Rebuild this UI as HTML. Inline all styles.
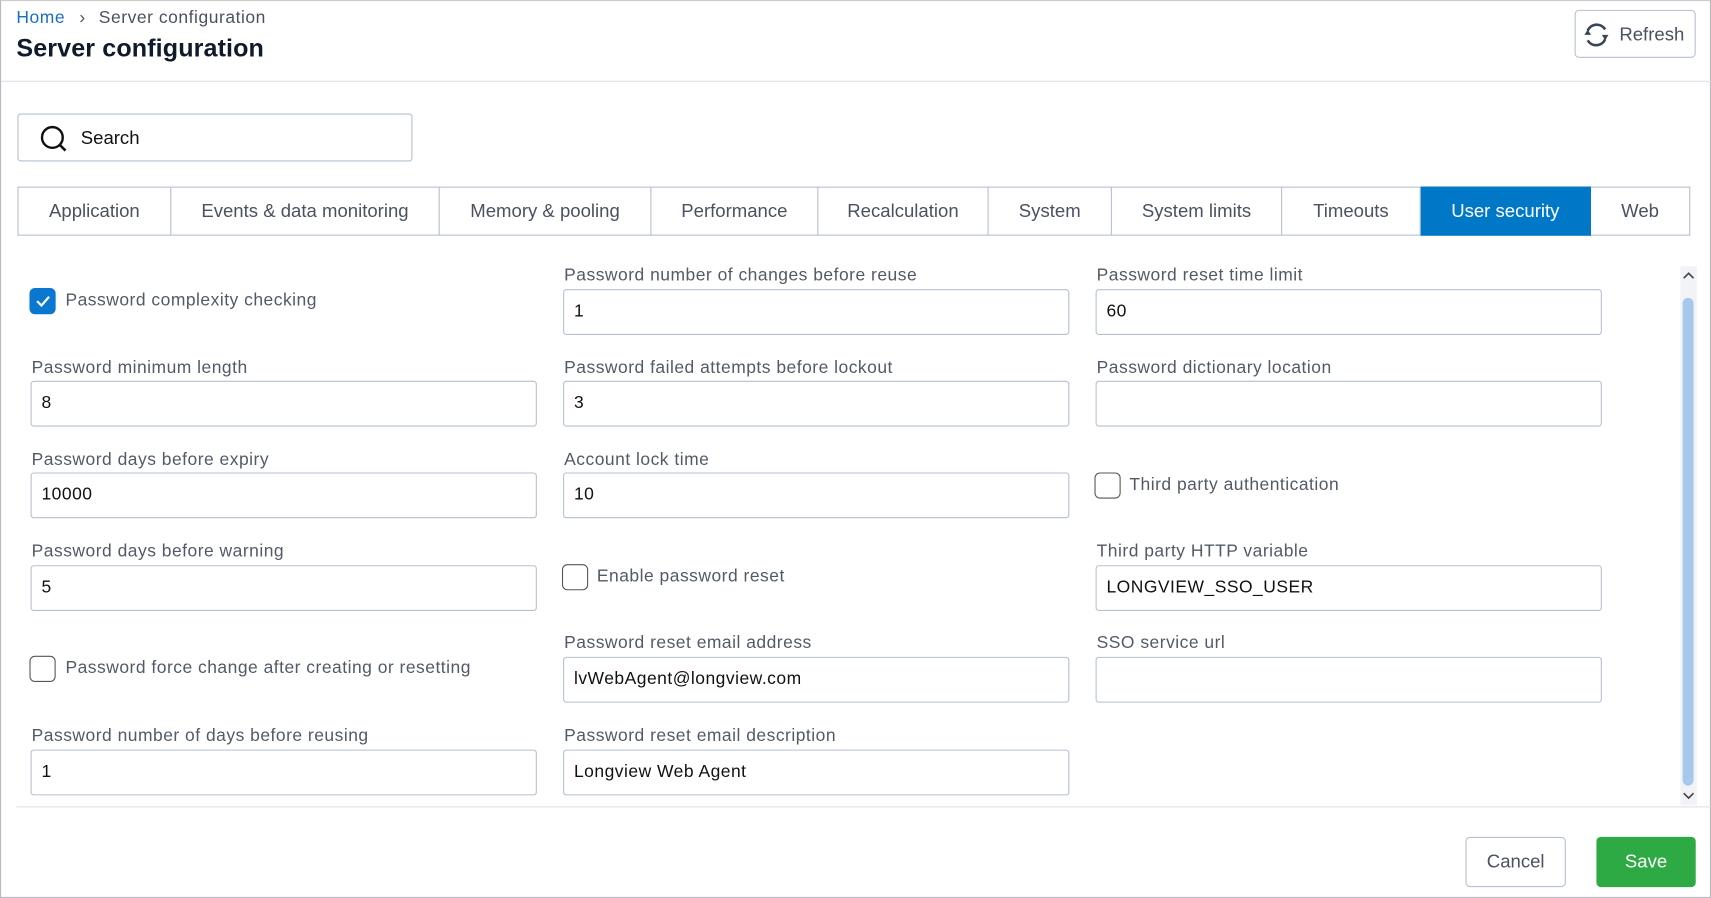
<!DOCTYPE html>
<html><head><meta charset="utf-8">
<style>
*{box-sizing:border-box;margin:0;padding:0}
html,body{width:1711px;height:898px;overflow:hidden;background:#fff;font-family:"Liberation Sans",sans-serif}
#w{position:absolute;left:0;top:0;width:1568px;height:823px;transform:scale(1.0912,1.0911);transform-origin:0 0;border:1px solid #b9b9c0;border-top-color:#ccc}
.a{position:absolute}
.lbl{position:absolute;font-size:16px;color:#525a68;white-space:nowrap;letter-spacing:0.45px;margin-top:1px}
.inp{position:absolute;height:42px;border:1px solid #b5c0cf;border-radius:3px;font-size:16px;color:#111;padding:11px 9px;white-space:nowrap;letter-spacing:0.45px}
.cb{position:absolute;width:24px;height:24px;border:1px solid #555;border-radius:5px;background:#fff}
.tab{position:absolute;top:170px;height:45px;border:1px solid #b5c0cf;border-left:none;font-size:17px;color:#4a5160;display:flex;align-items:center;justify-content:center}
</style></head><body><div id="w">
<div class="a" style="left:14px;top:7px;font-size:16px;color:#4a5160;letter-spacing:0.5px"><span style="color:#1b6fc2">Home</span><span style="margin:0 12px 0 13px">›</span>Server configuration</div>
<div class="a" style="left:14px;top:30px;font-size:23px;font-weight:bold;color:#0f1a2a;letter-spacing:0.1px">Server configuration</div>
<div class="a" style="left:1442px;top:8px;width:111px;height:44px;border:1px solid #b5c0cf;border-radius:4px;font-size:17px;color:#4a5160;padding:12px 0 0 40px">Refresh</div>
<svg class="a" style="left:1449px;top:18px" width="26" height="26" viewBox="0 0 26 26"><path d="M21 8A9 9 0 0 0 5 9" fill="none" stroke="#3a4558" stroke-width="2.4"/><path d="M5 18A9 9 0 0 0 21 17" fill="none" stroke="#3a4558" stroke-width="2.4"/><path d="M2 13l3-5 3 5z M18 13l3 5 3-5z" fill="#3a4558"/></svg>
<div class="a" style="left:0;top:73px;width:1568px;height:1px;background:#dde0e8"></div>
<div class="a" style="left:15px;top:103px;width:362px;height:44px;border:1px solid #b5c0cf;border-radius:3px"></div>
<svg class="a" style="left:34px;top:112px" width="28" height="28" viewBox="0 0 28 28"><circle cx="13" cy="13" r="9.5" fill="none" stroke="#111" stroke-width="2.2"/><path d="M20 20l5 5" stroke="#111" stroke-width="2.4"/></svg>
<div class="a" style="left:73px;top:116px;font-size:17px;color:#111">Search</div>
<div class="tab" style="left:15px;width:141px;border-left:1px solid #b5c0cf">Application</div>
<div class="tab" style="left:156px;width:246px">Events &amp; data monitoring</div>
<div class="tab" style="left:402px;width:194px">Memory &amp; pooling</div>
<div class="tab" style="left:596px;width:153px">Performance</div>
<div class="tab" style="left:749px;width:156px">Recalculation</div>
<div class="tab" style="left:905px;width:113px">System</div>
<div class="tab" style="left:1018px;width:156px">System limits</div>
<div class="tab" style="left:1174px;width:127px">Timeouts</div>
<div class="tab" style="left:1301px;width:156px;background:#0078c8;color:#fff;border-color:#0078c8">User security</div>
<div class="tab" style="left:1457px;width:91px">Web</div>

<div class="cb" style="left:26px;top:263px;background:#0a78d0;border-color:#0a78d0"><svg width="22" height="22" viewBox="0 0 22 22"><path d="M6 11l4 4 7-8" fill="none" stroke="#fff" stroke-width="2"/></svg></div>
<div class="lbl" style="left:59px;top:265px">Password complexity checking</div>
<div class="lbl" style="left:28px;top:327px">Password minimum length</div>
<div class="inp" style="left:27px;top:348px;width:464px">8</div>
<div class="lbl" style="left:28px;top:411px">Password days before expiry</div>
<div class="inp" style="left:27px;top:432px;width:464px">10000</div>
<div class="lbl" style="left:28px;top:495px">Password days before warning</div>
<div class="inp" style="left:27px;top:517px;width:464px">5</div>
<div class="cb" style="left:26px;top:600px"></div>
<div class="lbl" style="left:59px;top:602px">Password force change after creating or resetting</div>
<div class="lbl" style="left:28px;top:664px">Password number of days before reusing</div>
<div class="inp" style="left:27px;top:686px;width:464px">1</div>

<div class="lbl" style="left:516px;top:242px">Password number of changes before reuse</div>
<div class="inp" style="left:515px;top:264px;width:464px">1</div>
<div class="lbl" style="left:516px;top:327px">Password failed attempts before lockout</div>
<div class="inp" style="left:515px;top:348px;width:464px">3</div>
<div class="lbl" style="left:516px;top:411px">Account lock time</div>
<div class="inp" style="left:515px;top:432px;width:464px">10</div>
<div class="cb" style="left:514px;top:516px"></div>
<div class="lbl" style="left:546px;top:518px">Enable password reset</div>
<div class="lbl" style="left:516px;top:579px">Password reset email address</div>
<div class="inp" style="left:515px;top:601px;width:464px">lvWebAgent@longview.com</div>
<div class="lbl" style="left:516px;top:664px">Password reset email description</div>
<div class="inp" style="left:515px;top:686px;width:464px">Longview Web Agent</div>

<div class="lbl" style="left:1004px;top:242px">Password reset time limit</div>
<div class="inp" style="left:1003px;top:264px;width:464px">60</div>
<div class="lbl" style="left:1004px;top:327px">Password dictionary location</div>
<div class="inp" style="left:1003px;top:348px;width:464px"></div>
<div class="cb" style="left:1002px;top:432px"></div>
<div class="lbl" style="left:1034px;top:434px">Third party authentication</div>
<div class="lbl" style="left:1004px;top:495px">Third party HTTP variable</div>
<div class="inp" style="left:1003px;top:517px;width:464px">LONGVIEW_SSO_USER</div>
<div class="lbl" style="left:1004px;top:579px">SSO service url</div>
<div class="inp" style="left:1003px;top:601px;width:464px"></div>

<div class="a" style="left:1539px;top:243px;width:15px;height:494px;background:#f1f3f7"></div>
<div class="a" style="left:1541px;top:272px;width:10px;height:447px;background:#a6c9eb;border-radius:5px"></div>
<svg class="a" style="left:1540px;top:247px" width="13" height="10" viewBox="0 0 13 10"><path d="M2 7l4.5-4.5L11 7" fill="none" stroke="#444" stroke-width="1.5"/></svg>
<svg class="a" style="left:1540px;top:723px" width="13" height="10" viewBox="0 0 13 10"><path d="M2 3l4.5 4.5L11 3" fill="none" stroke="#444" stroke-width="1.5"/></svg>
<div class="a" style="left:14px;top:738px;width:1554px;height:1px;background:#dde0e8"></div>
<div class="a" style="left:1342px;top:766px;width:92px;height:46px;border:1px solid #b5c0cf;border-radius:4px;font-size:17px;color:#4a5160;text-align:center;line-height:44px">Cancel</div>
<div class="a" style="left:1462px;top:766px;width:91px;height:46px;background:#2eaa44;border-radius:4px;font-size:17px;color:#fff;text-align:center;line-height:46px">Save</div>
</div></body></html>
